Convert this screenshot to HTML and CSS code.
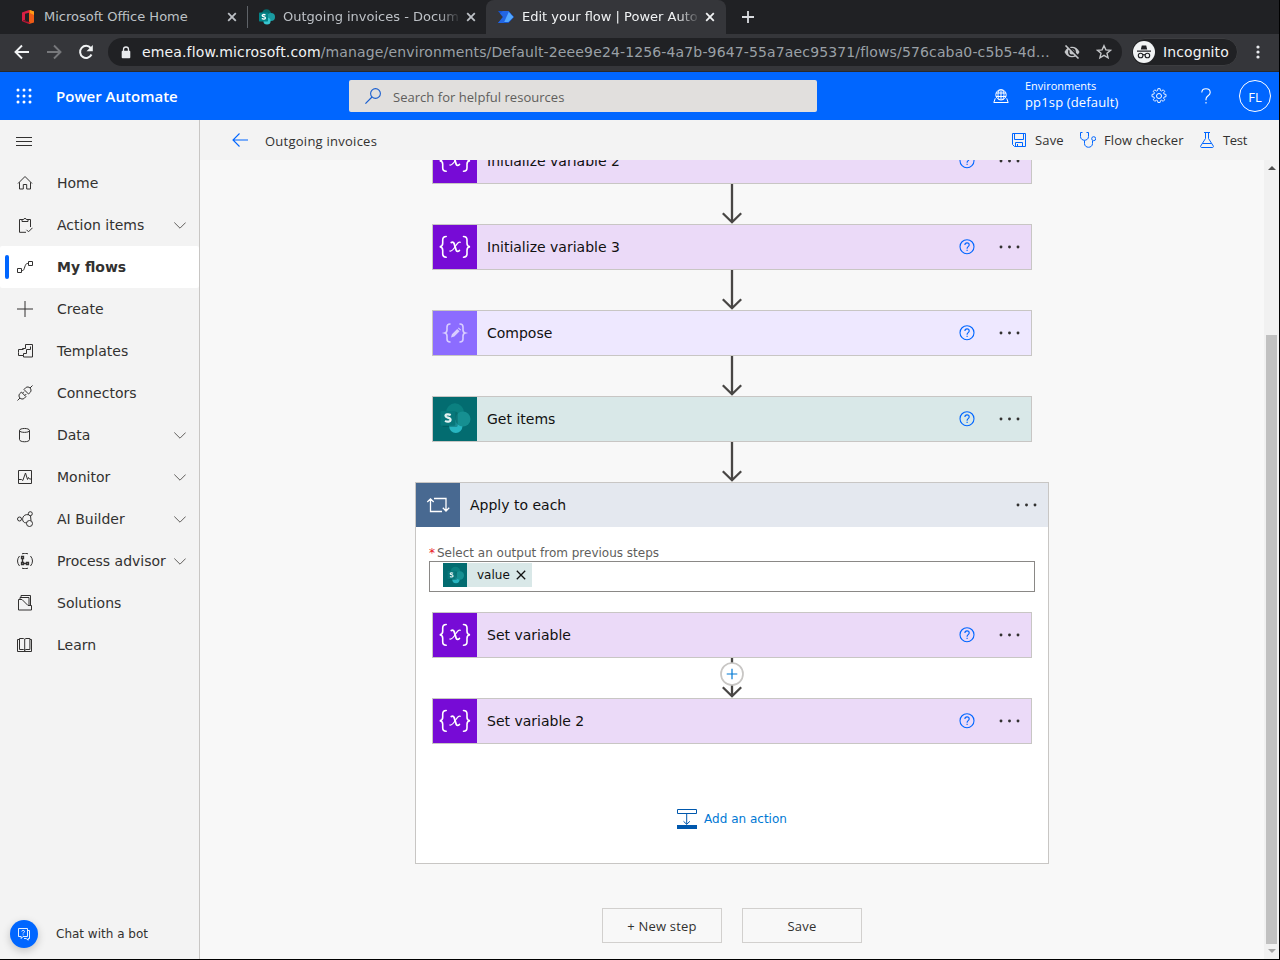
FILE: index.html
```html
<!DOCTYPE html>
<html lang="en">
<head>
<meta charset="utf-8">
<title>Edit your flow | Power Automate</title>
<link rel="stylesheet" href="styles.css">
</head>
<body>
<svg class="defs" aria-hidden="true">
  <symbol id="close" viewBox="0 0 10 10"><path d="M1.2 1.2l7.6 7.6M8.8 1.2L1.2 8.8" fill="none" stroke="currentColor" stroke-width="1.8"/></symbol>
  <symbol id="close-thin" viewBox="0 0 10 10"><path d="M.8.8l8.400 8.400M9.200.8L.8 9.200" fill="none" stroke="currentColor" stroke-width="1.300"/></symbol>
  <symbol id="chev" viewBox="0 0 12 7"><path d="M.3.5L6 6.2 11.700.5" fill="none" stroke="currentColor" stroke-width="1"/></symbol>
  <symbol id="help" viewBox="0 0 16 16"><circle cx="8" cy="7.700" r="7" fill="none" stroke="currentColor" stroke-width="1.1"/><path d="M5.900 6.100c0-1.400.9-2.200 2.100-2.200s2.200.8 2.200 2c0 1.700-2.100 1.700-2.100 3.500v.4M8.100 10.700v1.200" fill="none" stroke="currentColor" stroke-width="1.100"/></symbol>
  <symbol id="dots" viewBox="0 0 22 4"><circle cx="2" cy="2" r="1.450"/><circle cx="10.500" cy="2" r="1.450"/><circle cx="19" cy="2" r="1.450"/></symbol>
  <symbol id="arrow" viewBox="0 0 20 40"><path d="M10 0v37M.8 29.200l9.200 9 9.200-9" fill="none" stroke="#484644" stroke-width="2.300"/></symbol>
  <symbol id="var" viewBox="0 0 44 44"><g fill="none" stroke="#fff" stroke-linecap="round"><path d="M13.200 11.500c-3 0-3.500 1.300-3.500 3.500v3.200c0 2-.6 3.200-3 3.500 2.400.3 3 1.500 3 3.500v3.500c0 2.200.5 3.500 3.500 3.500M30.500 11.500c3 0 3.500 1.300 3.500 3.500v3.200c0 2 .6 3.200 3 3.500-2.400.3-3 1.500-3 3.500v3.500c0 2.200-.5 3.500-3.500 3.500" stroke-width="1.600"/><path d="M18.300 17.600c1.300-.8 2.400-.4 2.900 1.200l1.900 6.200c.5 1.800 2 1.900 3.300.5" stroke-width="1.800"/><path d="M27.300 17.300c-1.600-.8-3 .9-4.900 4-1.800 2.900-3.600 5.400-5.600 4.700" stroke-width="1.200"/></g></symbol>
  <symbol id="sp" viewBox="0 0 24 24"><circle cx="12" cy="7.700" r="5.600" fill="#0b8080"/><circle cx="12.500" cy="16.600" r="4.200" fill="#28b5c0"/><circle cx="17" cy="12" r="4.800" fill="#168f91"/><rect x="4" y="7.400" width="9.700" height="9.700" rx="1" fill="#024e50" opacity=".4"/><rect x="2.900" y="6.900" width="9.300" height="9.300" rx=".8" fill="#07777a"/><path d="M9.300 9.500c-1.500-.8-3.400-.5-3.300.6.1 1.300 3.200.7 3.200 2.400 0 1.300-2 1.600-3.500.7" fill="none" stroke="#e4f1f1" stroke-width="1.400"/></symbol>
</svg>

<header class="tabs">
  <div class="tab tab-first">
    <svg class="favicon" viewBox="0 0 16 16"><path d="M9 1L2 3.500v8.800l3-1.500V4.800l5-1.300z" fill="#d91f43"/><path d="M9 1l5 1.500v11L9 15z" fill="#ee5b16"/><path d="M2 12.300L9 15l1-2-5-.8 1-1.300z" fill="#b81535"/><path d="M10 1l4 1.500V6l-4-2z" fill="#ff9b17"/></svg>
    <span class="tab-title">Microsoft Office Home</span>
    <svg class="tab-x"><use href="#close"/></svg>
  </div>
  <div class="tab tab-second">
    <svg class="favicon" viewBox="0 0 16 16"><circle cx="7.500" cy="5" r="4.700" fill="#05696b"/><circle cx="12" cy="8" r="4" fill="#1a9ba1"/><circle cx="8" cy="12" r="3.600" fill="#37c6d0"/><rect x="0" y="3.500" width="9" height="9" rx=".7" fill="#038387"/><path d="M6.500 6C4.800 5 3 5.700 3.200 6.700c.2 1.300 3.200.7 3.200 2.300 0 1.300-2.200 1.400-3.600.5" fill="none" stroke="#fff" stroke-width="1.300"/></svg>
    <span class="tab-title fade">Outgoing invoices - Docum</span>
    <svg class="tab-x"><use href="#close"/></svg>
  </div>
  <div class="tab tab-active">
    <svg class="favicon" viewBox="0 0 16 16"><path d="M0 2h10.500L16 8l-5.500 6H0l5-6z" fill="#1554d0"/><path d="M5 2h5.500L13 5 5.800 14H0l5-6-3-3.500z" fill="#2266e3"/><path d="M10.700 3L15.500 8l-5 5H6.200z" fill="#53a8ff"/></svg>
    <span class="tab-title fade">Edit your flow | Power Auto</span>
    <svg class="tab-x"><use href="#close"/></svg>
  </div>
  <svg class="newtab" viewBox="0 0 12 12"><path d="M6 0v12M0 6h12" stroke="#dadce0" stroke-width="1.800"/></svg>
</header>

<div class="toolbar">
  <svg class="nav" viewBox="0 0 16 16"><path d="M15 8H2M8 1.500L1.500 8 8 14.500" fill="none" stroke="#f1f3f4" stroke-width="1.900"/></svg>
  <svg class="nav" viewBox="0 0 16 16"><path d="M1 8h13M8 1.500L14.500 8 8 14.500" fill="none" stroke="#77787b" stroke-width="1.900"/></svg>
  <svg class="nav" viewBox="0 0 16 16"><path d="M13.500 10.500A6 6 0 1 1 12.700 4" fill="none" stroke="#f1f3f4" stroke-width="2"/><path d="M14.800 1v6.300H8.500z" fill="#f1f3f4"/></svg>
  <div class="omnibox">
    <svg class="lock" viewBox="0 0 10 13"><path d="M2.500 5.500V3.500a2.500 2.500 0 0 1 5 0v2" fill="none" stroke="#e8eaed" stroke-width="1.300"/><rect x=".7" y="4.800" width="8.600" height="7.500" rx="1" fill="#e8eaed"/></svg>
    <span class="url"><b>emea.flow.microsoft.com</b>/manage/environments/Default-2eee9e24-1256-4a7b-9647-55a7aec95371/flows/576caba0-c5b5-4d…</span>
    <svg class="eye" viewBox="0 0 16 14"><path d="M.5 7c3-7 12-7 15 0-3 7-12 7-15 0z" fill="#c4c6c9"/><circle cx="8" cy="7" r="3.200" fill="none" stroke="#202124" stroke-width="1.400"/><path d="M3 .8L15.800 13" stroke="#202124" stroke-width="2"/><path d="M1.500.5L14.500 13.500" stroke="#c4c6c9" stroke-width="1.600"/></svg>
    <svg class="star" viewBox="0 0 16 16"><path d="M8 1.700l1.900 4.200 4.600.4-3.500 3 1.100 4.500L8 11.400l-4.100 2.400L5 9.300l-3.500-3 4.600-.4z" fill="none" stroke="#c4c6c9" stroke-width="1.400"/></svg>
  </div>
  <div class="incognito">
    <svg viewBox="0 0 22 22"><circle cx="11" cy="11" r="11" fill="#f1f3f4"/><path d="M7.800 8.500l1-4h4.400l1 4zM4 9.500h14v1.300H4z" fill="#202124"/><g fill="none" stroke="#202124" stroke-width="1.100"><circle cx="7.600" cy="14.500" r="2.300"/><circle cx="14.400" cy="14.500" r="2.300"/><path d="M9.900 14q1.100-.7 2.200 0"/></g></svg>
    <span>Incognito</span>
  </div>
  <svg class="kebab" viewBox="0 0 4 14"><circle cx="2" cy="2" r="1.600"/><circle cx="2" cy="7" r="1.600"/><circle cx="2" cy="12" r="1.600"/></svg>
</div>

<div class="suite">
  <svg class="waffle" viewBox="0 0 16 16"><g fill="#fff"><circle cx="2" cy="2" r="1.500"/><circle cx="8" cy="2" r="1.500"/><circle cx="14" cy="2" r="1.500"/><circle cx="2" cy="8" r="1.500"/><circle cx="8" cy="8" r="1.500"/><circle cx="14" cy="8" r="1.500"/><circle cx="2" cy="14" r="1.500"/><circle cx="8" cy="14" r="1.500"/><circle cx="14" cy="14" r="1.500"/></g></svg>
  <span class="brand">Power Automate</span>
  <div class="search">
    <svg viewBox="0 0 16 16"><circle cx="10.500" cy="5.500" r="4.900" fill="none" stroke="#1a5fd0" stroke-width="1.100"/><path d="M7 9L.4 15.600" stroke="#1a5fd0" stroke-width="1.200"/></svg>
    <span>Search for helpful resources</span>
  </div>
  <svg class="env-icon" viewBox="0 0 16 16"><g fill="none" stroke="#fff"><circle cx="8" cy="6.800" r="5.200"/><path d="M8 1.600v10.400M3 5h10M3 8.500h10M6.500 2c-2 2.500-2 7 0 10M9.500 2c2 2.500 2 7 0 10"/><path d="M2.300 10.300L.8 14.500h14.400l-1.500-4.200"/></g></svg>
  <div class="env"><span class="env-label">Environments</span><span class="env-name">pp1sp (default)</span></div>
  <svg class="gear" viewBox="0 0 16 16"><g fill="none" stroke="#fff"><circle cx="8" cy="8" r="2.500"/><path stroke-width=".9" d="M6.900.6h2.200l.3 1.900 1.200.5 1.600-1.200 1.500 1.500-1.100 1.600.5 1.200 1.900.3v2.300l-1.900.3-.5 1.200 1.100 1.600-1.500 1.500-1.600-1.100-1.200.5-.3 1.800H6.900l-.3-1.800-1.200-.5-1.600 1.100-1.500-1.500 1.100-1.600-.5-1.200L1 8.700V6.400l1.900-.3.500-1.200-1.100-1.600 1.500-1.500L5.400 3l1.200-.5z"/></g></svg>
  <svg class="qmark" viewBox="0 0 10 16"><path d="M.8 4.600C.8 2.200 2.500.7 5 .7s4.200 1.500 4.200 3.700C9.200 7.700 5 7.800 5 11v1.200M5 14v1.600" fill="none" stroke="#fff" stroke-width="1.100"/></svg>
  <div class="avatar">FL</div>
</div>

<div class="app">
  <nav class="side">
    <svg class="burger" viewBox="0 0 16 10"><path d="M0 1.500h16M0 5.500h16M0 9.500h16" stroke="#323130" stroke-width="1"/></svg>
    <div class="item"><svg class="ic" viewBox="0 0 16 16"><path d="M1 8.500L8 1.500l7 7M2.500 7.300v6.700h3.800V9.500h3.400V14h3.800V7.300"/></svg><span>Home</span></div>
    <div class="item"><svg class="ic" viewBox="0 0 16 16"><path d="M5 2.500H2.500v12.800H9M11 2.500h2.500V10M5 4.500v-2h1.700c0-1.500 2.600-1.500 2.600 0H11v2zM9.500 12.800l2 2 4-4"/></svg><span>Action items</span><svg class="chev"><use href="#chev"/></svg></div>
    <div class="item selected"><svg class="ic" viewBox="0 0 16 16"><path d="M.5 9.500h4v4h-4zM11.500 2.500h4v4h-4zM4.500 11.500h1.200c2 0 2-7 4.500-7h1.300"/></svg><span>My flows</span></div>
    <div class="item"><svg class="ic" viewBox="0 0 16 16"><path d="M8 0v16M0 8h16"/></svg><span>Create</span></div>
    <div class="item"><svg class="ic" viewBox="0 0 16 16"><path d="M5.500 6.500v-1h3v-4h7v9M1.500 9.500v-3h5M1.500 9.500v3h5v-2h3v-4h4v-3M6.500 12.500v1.500h9v-4"/></svg><span>Templates</span></div>
    <div class="item"><svg class="ic" viewBox="0 0 16 16"><path d="M.5 15.500L3 13M15.500.5L13 3M2.700 8.700l1.700-1.600 4.500 4.500-1.600 1.700c-3 2.400-7-1.600-4.600-4.600zM7 4.500l1.700-1.800c3-2.400 7 1.600 4.600 4.600L11.500 9zM5.500 8.200L7 6.700M7.800 10.500L9.300 9"/></svg><span>Connectors</span></div>
    <div class="item"><svg class="ic" viewBox="0 0 16 16"><path d="M2.500 3.500v9c0 3 10 3 10 0v-9c0-2.700-10-2.700-10 0 0 2.500 10 2.500 10 0"/></svg><span>Data</span><svg class="chev"><use href="#chev"/></svg></div>
    <div class="item"><svg class="ic" viewBox="0 0 16 16"><path d="M1.500 1.500h13v13h-13zM2 10.500h2.500l1.300 1L8.500 4l2 6.500 1-2 1 1.500h2"/></svg><span>Monitor</span><svg class="chev"><use href="#chev"/></svg></div>
    <div class="item"><svg class="ic" viewBox="0 0 16 16"><circle cx="2.500" cy="8" r="2"/><circle cx="13.300" cy="2.700" r="2"/><circle cx="12.500" cy="12.500" r="3"/><path d="M11.300 3.700C4 2.500 4 13 9.700 11.700M13.500 4.700L14 9.700"/></svg><span>AI Builder</span><svg class="chev"><use href="#chev"/></svg></div>
    <div class="item"><svg class="ic" viewBox="0 0 16 16"><path d="M5 .8q3-1.200 6 0M5 15.200q3 1.200 6 0M2.500 3Q-1.500 8 2.500 13M13.500 3q4 5 0 10"/><path d="M4.500 3.500h2v2h-2zM4.500 9.500h2v2h-2zM9.500 9.500h2v2h-2zM5.500 5.500v4M6.500 10.500h3" stroke-width="1.300"/></svg><span>Process advisor</span><svg class="chev"><use href="#chev"/></svg></div>
    <div class="item"><svg class="ic" viewBox="0 0 16 16"><path d="M1.500 4.500H5l6 6h3.500v4.500h-13zM3 4V2.500h9v8M4 2V.5h9.500v10"/></svg><span>Solutions</span></div>
    <div class="item"><svg class="ic" viewBox="0 0 16 16"><path d="M2.500 1.500h4l1.200.8 1.200-.8h4v11h-4l-1.200.8-1.200-.8h-4zM7.700 2.300v12M2.500 2.500h-2v12h14v-12h-1.500"/></svg><span>Learn</span></div>
    <div class="bot">
      <div class="bot-btn"><svg viewBox="0 0 14 14"><path d="M1.500 1.500h9v8H6l-1.800 2v-2H1.500zM10.500 3.500h2v8h-1.300v1.700l-2-1.700H7" fill="none" stroke="#fff" stroke-width=".9"/><path d="M4.800 4.500c0-1.500 2.700-1.500 2.700 0 0 1-1.400 1-1.400 2M6.100 7.400v.9" fill="none" stroke="#fff" stroke-width=".9"/></svg></div>
      <span>Chat with a bot</span>
    </div>
  </nav>

  <main class="main">
    <div class="cmd">
      <svg class="back" viewBox="0 0 16 14"><path d="M16 7H1M7.500.5L1 7l6.500 6.500" fill="none" stroke="#0066ff" stroke-width="1.100"/></svg>
      <span class="flow-name">Outgoing invoices</span>
      <svg class="ci" viewBox="0 0 16 16"><path d="M1.500 1.500h13v13h-11l-2-2zM3.500 1.500v6h9v-6M4.500 14.500v-4h7v4M6.500 14.500V12"/></svg><span class="c-save">Save</span>
      <svg class="ci" viewBox="0 0 16 16"><path d="M2.500.5h-2v4c0 5 8 5 8 0v-4h-2M4.500 8.500v3c0 5 8 5 8 0V9"/><circle cx="13.700" cy="6.700" r="2"/></svg><span class="c-check">Flow checker</span>
      <svg class="ci" viewBox="0 0 16 16"><path d="M5 .5h6M6.500.5v6L1.700 14c-.3.800 0 1.500.8 1.500h11c.8 0 1.100-.7.8-1.500L9.500 6.500v-6M3.500 11.500h9"/></svg><span class="c-test">Test</span>
    </div>
    <div class="body">
      <div class="canvas">
        <div class="card purple"><svg class="tile"><use href="#var"/></svg><span>Initialize variable 2</span><svg class="help"><use href="#help"/></svg><svg class="dots"><use href="#dots"/></svg></div>
        <svg class="arrow"><use href="#arrow"/></svg>
        <div class="card purple"><svg class="tile"><use href="#var"/></svg><span>Initialize variable 3</span><svg class="help"><use href="#help"/></svg><svg class="dots"><use href="#dots"/></svg></div>
        <svg class="arrow"><use href="#arrow"/></svg>
        <div class="card compose"><svg class="tile" viewBox="0 0 44 44"><g fill="none" stroke="#d9ceff" stroke-width="1.600" stroke-linecap="round"><path d="M17 13c-2.500 0-3 1-3 3v3c0 1.700-.6 2.500-2.200 3 1.600.4 2.200 1.300 2.200 3v3c0 2 .5 3 3 3M27 13c2.500 0 3 1 3 3v3c0 1.700.6 2.500 2.200 3-1.600.4-2.200 1.300-2.200 3v3c0 2-.5 3-3 3"/></g><path d="M18 26.500l.9-3.300 5.300-5.300 2.400 2.400-5.300 5.300zM24.900 17.200l.8-.8 2.400 2.400-.8.800z" fill="#d9ceff"/></svg><span>Compose</span><svg class="help"><use href="#help"/></svg><svg class="dots"><use href="#dots"/></svg></div>
        <svg class="arrow"><use href="#arrow"/></svg>
        <div class="card share"><div class="tile"><svg class="sp-logo"><use href="#sp"/></svg></div><span>Get items</span><svg class="help"><use href="#help"/></svg><svg class="dots"><use href="#dots"/></svg></div>
        <svg class="arrow"><use href="#arrow"/></svg>
        <section class="scope">
          <div class="scope-head"><svg class="tile" viewBox="0 0 44 44"><path d="M18 15.500h12v12M26.800 24.800l3.200 3.200 3.200-3.200M26 28.500H14.500v-12M11.300 19l3.200-3.200 3.200 3.200" fill="none" stroke="#fff" stroke-width="1.300"/></svg><span>Apply to each</span><svg class="dots"><use href="#dots"/></svg></div>
          <div class="field">
            <label><i>*</i>Select an output from previous steps</label>
            <div class="input"><div class="token"><div class="token-ic"><svg><use href="#sp"/></svg></div><span>value</span><svg class="token-x"><use href="#close-thin"/></svg></div></div>
          </div>
          <div class="card purple"><svg class="tile"><use href="#var"/></svg><span>Set variable</span><svg class="help"><use href="#help"/></svg><svg class="dots"><use href="#dots"/></svg></div>
          <div class="insert"><svg class="arrow"><use href="#arrow"/></svg><svg class="plus" viewBox="0 0 24 24"><circle cx="12" cy="12" r="11" fill="#fff" stroke="#c8c6c4" stroke-width="1.700"/><path d="M12 6.700v10.600M6.700 12h10.600" stroke="#0078d4" stroke-width="1.200"/></svg></div>
          <div class="card purple"><svg class="tile"><use href="#var"/></svg><span>Set variable 2</span><svg class="help"><use href="#help"/></svg><svg class="dots"><use href="#dots"/></svg></div>
          <div class="add"><svg viewBox="0 0 20 20"><path d="M.5.500h19v4H.500z" fill="none" stroke="#0058ad"/><path d="M9.700 5v10.300M6.500 12.300l3.200 3 3.200-3" fill="none" stroke="#0058ad"/><path d="M0 16h20v4H0z" fill="#0058ad"/></svg><span>Add an action</span></div>
        </section>
        <div class="actions"><div class="btn">+ New step</div><div class="btn">Save</div></div>
      </div>
      <div class="scroll"><svg class="up" viewBox="0 0 8 4"><path d="M0 4l4-4 4 4z" fill="#505050"/></svg><div class="thumb"></div><svg class="down" viewBox="0 0 8 4"><path d="M0 0l4 4 4-4z" fill="#a3a3a3"/></svg></div>
    </div>
  </main>
</div>
</body>
</html>
```
FILE: styles.css
```css
* { box-sizing: border-box; }
body { margin: 0; width: 1280px; height: 960px; overflow: hidden; display: flex; flex-direction: column; border-right: 1px solid #000; border-bottom: 1px solid #000; font: 14px/20px "DejaVu Sans", sans-serif; color: #323130; background: #f8f8f8; }
svg { display: block; flex: none; }
span { white-space: nowrap; }
.defs { position: absolute; width: 0; height: 0; }

.tabs { height: 34px; flex: none; display: flex; background: #202124; padding-left: 8px; font-size: 13px; color: #bdc1c6; }
.tab { height: 34px; display: flex; align-items: center; padding-left: 12px; }
.tab-first { width: 240px; border-right: 1px solid transparent; border-image: linear-gradient(transparent 7px, #5f6368 7px, #5f6368 27px, transparent 27px) 1; }
.tab-second { width: 238px; padding-left: 11px; }
.tab-active { width: 240px; background: #35363a; border-radius: 8px 8px 0 0; color: #f1f3f4; }
.favicon { width: 16px; height: 16px; margin-right: 8px; }
.tab-title { width: 175px; }
.fade { -webkit-mask-image: linear-gradient(90deg, #000 156px, transparent 178px); mask-image: linear-gradient(90deg, #000 156px, transparent 178px); }
.tab-x { width: 10px; height: 10px; margin-left: 8px; }
.newtab { width: 12px; height: 12px; margin: 11px 0 0 16px; }

.toolbar { height: 38px; flex: none; display: flex; align-items: center; background: #35363a; border-bottom: 1px solid #28292c; padding: 0 0 1px 14px; }
.nav { width: 16px; height: 16px; margin-right: 16px; }
.omnibox { width: 1014px; height: 28px; margin-left: -2px; border-radius: 14px; background: #202124; display: flex; align-items: center; padding-left: 13px; }
.lock { width: 10px; height: 13px; margin-right: 11px; }
.url { width: 922px; color: #9aa0a6; font-size: 14px; letter-spacing: .14px; }
.url b { color: #f1f3f4; font-weight: 400; }
.eye { width: 16px; height: 14px; }
.star { width: 16px; height: 16px; margin-left: 16px; }
.incognito { width: 107px; height: 28px; margin-left: 9px; border-radius: 14px; background: #202124; border: 1px solid #3c3d40; color: #f1f3f4; display: flex; align-items: center; padding-left: 1px; gap: 8px; letter-spacing: .1px; }
.incognito svg { width: 22px; height: 22px; }
.kebab { width: 4px; height: 14px; margin-left: 18px; fill: #e8eaed; }

.suite { height: 48px; flex: none; background: #0066ff; color: #fff; display: flex; align-items: center; padding-left: 16px; font-family: "Open Sans", sans-serif; }
.waffle { width: 16px; height: 16px; }
.brand { width: 293px; margin-left: 24px; font-weight: 600; font-size: 15px; }
.search { width: 468px; height: 32px; border-radius: 2px; background: #e1dfdd; color: #605e5c; display: flex; align-items: center; padding-left: 16px; gap: 12px; font-size: 13px; letter-spacing: .03px; }
.search svg { width: 16px; height: 16px; }
.search span { padding-top: 2px; }
.env-icon { width: 16px; height: 16px; margin-left: 176px; }
.env { width: 126px; margin-left: 16px; display: flex; flex-direction: column; }
.env-label { font-size: 11px; line-height: 14px; margin-top: -2px; }
.env-name { font-size: 13px; line-height: 18px; letter-spacing: .15px; }
.gear { width: 16px; height: 16px; }
.qmark { width: 10px; height: 16px; margin-left: 34px; }
.avatar { width: 32px; height: 32px; margin-left: 28px; border: 1px solid #fff; border-radius: 50%; text-align: center; line-height: 32px; font-size: 13px; }

.app { flex: 1; min-height: 0; display: flex; }
.side { width: 200px; flex: none; border-right: 1px solid #c8c6c4; background: #f3f3f3; display: flex; flex-direction: column; }
.burger { width: 16px; height: 10px; margin: 16px 0 16px 16px; }
.item { height: 42px; display: flex; align-items: center; padding-left: 17px; flex: none; }
.item span { width: 115px; }
.ic { width: 16px; height: 16px; margin-right: 24px; fill: none; stroke: #323130; }
.chev { width: 12px; height: 7px; margin-left: 2px; color: #605e5c; }
.selected { background: #fff; border-radius: 2px; font-weight: 700; padding-left: 5px; }
.selected::before { content: ""; width: 4px; height: 24px; border-radius: 2px; background: #0066ff; margin-right: 8px; }
.bot { margin: auto 0 11px 10px; display: flex; align-items: center; gap: 18px; font-size: 12px; }
.bot-btn { width: 28px; height: 28px; border-radius: 50%; background: #0066ff; display: grid; place-items: center; box-shadow: 0 3px 8px rgba(0,0,0,.2); }
.bot-btn svg { width: 14px; height: 14px; }

.main { flex: 1; min-width: 0; display: flex; flex-direction: column; }
.cmd { height: 40px; flex: none; background: #f3f3f3; display: flex; align-items: center; padding-left: 32px; font: 13px/20px "Open Sans", sans-serif; }
.back { width: 16px; height: 14px; margin-right: 17px; }
.flow-name { width: 746px; padding-top: 2px; letter-spacing: .25px; }
.ci { width: 16px; height: 16px; fill: none; stroke: #0066ff; margin-right: 8px; }
.c-save { width: 45px; letter-spacing: .15px; }
.c-check { width: 95px; letter-spacing: .1px; }
.c-test { letter-spacing: -.3px; }
.body { flex: 1; min-height: 0; display: flex; overflow: hidden; }
.canvas { flex: 1; display: flex; flex-direction: column; align-items: center; margin-top: -22px; color: #111; }
.card { width: 600px; height: 46px; flex: none; border: 1px solid #c8c6c4; display: flex; align-items: center; }
.card > span { width: 471.5px; margin-left: 10px; }
.tile { width: 44px; height: 44px; flex: none; }
.purple { background: #ebdaf8; }
.purple .tile { background: #770bd6; }
.compose { background: #eee8ff; }
.compose .tile { background: #8c6cff; }
.share { background: #d9e8e8; }
.share .tile, .token-ic { background: #036c70; display: grid; place-items: center; }
.sp-logo { width: 38px; height: 38px; }
.help { width: 16px; height: 16px; color: #0066ff; margin-right: 24px; }
.dots { width: 22px; height: 4px; fill: #323130; }
.arrow { width: 20px; height: 40px; }
.scope { width: 634px; height: 382px; flex: none; border: 1px solid #c8c6c4; background: #fff; display: flex; flex-direction: column; align-items: center; }
.scope-head { width: 632px; height: 44px; flex: none; background: #e4e8ef; display: flex; align-items: center; }
.scope-head .tile { background: #486991; }
.scope-head span { width: 545.5px; margin-left: 10px; }
.field { width: 606px; height: 85px; padding-top: 18px; display: flex; flex-direction: column; flex: none; }
.field label { height: 16px; line-height: 16px; font-size: 12px; color: #605e5c; }
.field i { color: #e81123; font-style: normal; margin-right: 2px; }
.input { height: 31px; border: 1px solid #8a8886; padding: 1px 0 0 13px; }
.token { width: 89px; height: 24px; background: #d9e8e8; display: flex; align-items: center; font-size: 12px; }
.token-ic { width: 24px; height: 24px; }
.token-ic svg { width: 21px; height: 21px; }
.token span { width: 39px; margin-left: 10px; }
.token-x { width: 10px; height: 10px; }
.insert { width: 24px; display: grid; justify-items: center; }
.insert > svg { grid-area: 1 / 1; }
.plus { width: 24px; height: 24px; margin-top: 4px; }
.add { margin-top: 65px; display: flex; align-items: center; gap: 7px; font-size: 12px; color: #0078d4; }
.add svg { width: 20px; height: 20px; }
.actions { display: flex; gap: 20px; margin-top: 44px; flex: none; font: 13px/33px "Open Sans", sans-serif; letter-spacing: .2px; color: #323130; }
.btn { width: 120px; height: 35px; border: 1px solid #d2d0ce; text-align: center; line-height: 35px; }
.scroll { width: 15px; flex: none; background: #f1f1f1; display: flex; flex-direction: column; align-items: center; }
.up { width: 8px; height: 4px; margin-top: 6px; }
.thumb { width: 11px; height: 609px; margin-top: 165px; background: #c1c1c1; }
.down { width: 8px; height: 4px; margin-top: 5px; }
```
